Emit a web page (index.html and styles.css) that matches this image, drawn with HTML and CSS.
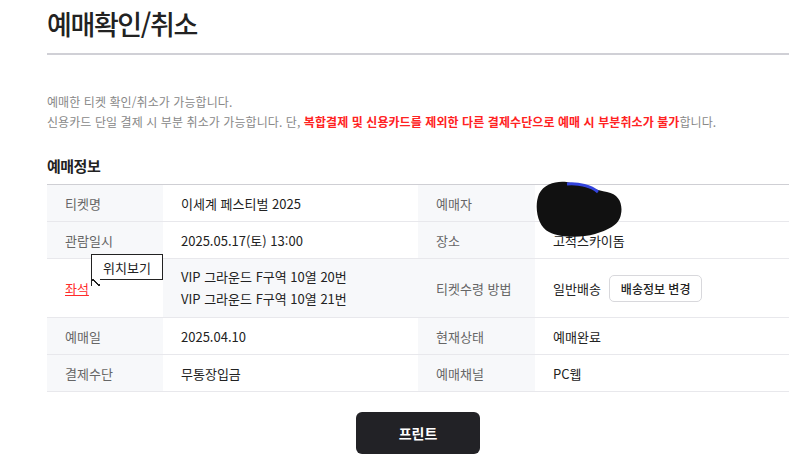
FILE: index.html
```html
<!DOCTYPE html>
<html lang="ko">
<head>
<meta charset="utf-8">
<link rel="stylesheet" href="styles.css">
</head>
<body>
<div class="page">
  <h1 class="title">예매확인/취소</h1>
  <div class="desc">
    <p>예매한 티켓 확인/취소가 가능합니다.</p>
    <p>신용카드 단일 결제 시 부분 취소가 가능합니다. 단, <strong class="warn">복합결제 및 신용카드를 제외한 다른 결제수단으로 예매 시 부분취소가 불가</strong>합니다.</p>
  </div>
  <h2 class="section">예매정보</h2>
  <div class="table">
    <div class="row">
      <div class="th">티켓명</div>
      <div class="td">이세계 페스티벌 2025</div>
      <div class="th">예매자</div>
      <div class="td redact-cell">
        <svg class="redact" width="90" height="60" viewBox="0 0 90 60">
          <path d="M4 14 C10 2 26 0 36 3 C50 6 62 10 72 12 C84 14 88 24 86 34 C84 46 72 50 60 54 C46 58 26 58 14 52 C2 46 -1 26 4 14 Z" fill="#111"/>
          <path d="M32 4 C44 3 56 6 63 12" stroke="#3344dd" stroke-width="3" fill="none"/>
        </svg>
      </div>
    </div>
    <div class="row">
      <div class="th">관람일시</div>
      <div class="td">2025.05.17(토) 13:00</div>
      <div class="th">장소</div>
      <div class="td">고척스카이돔</div>
    </div>
    <div class="row tall">
      <div class="th seat-cell">
        <a class="seat">좌석</a>
        <span class="tip">위치보기</span>
      </div>
      <div class="td lines">
        <span>VIP 그라운드 F구역 10열 20번</span>
        <span>VIP 그라운드 F구역 10열 21번</span>
      </div>
      <div class="th">티켓수령 방법</div>
      <div class="td">일반배송 <button class="small-btn">배송정보 변경</button></div>
    </div>
    <div class="row">
      <div class="th">예매일</div>
      <div class="td">2025.04.10</div>
      <div class="th">현재상태</div>
      <div class="td">예매완료</div>
    </div>
    <div class="row">
      <div class="th">결제수단</div>
      <div class="td">무통장입금</div>
      <div class="th">예매채널</div>
      <div class="td">PC웹</div>
    </div>
  </div>
  <div class="actions">
    <button class="print">프린트</button>
  </div>
</div>
</body>
</html>
```
FILE: styles.css
```css
* { box-sizing: border-box; }
html, body { margin: 0; padding: 0; background: #fff; }
body {
  font-family: "Noto Sans CJK KR", "Noto Sans", sans-serif;
  color: #222;
  overflow: hidden;
}
.page {
  margin-left: 47px;
  width: 742px;
}
.title {
  margin: 0;
  padding-top: 4px;
  height: 49px;
  font-size: 27px;
  font-weight: 500;
  letter-spacing: -1.4px;
  line-height: 40px;
  border-bottom: 2px solid #d0d0d6;
  box-sizing: content-box;
}
.desc {
  margin-top: 37px;
  font-size: 12px;
  color: #888;
  letter-spacing: 0.08px;
  line-height: 20px;
}
.desc p { margin: 0; }
.warn { color: #ff2222; font-weight: 700; }
.section {
  margin: 23px 0 0;
  font-size: 15px;
  font-weight: 700;
  line-height: 22px;
  letter-spacing: -0.5px;
  height: 29px;
}
.table {
  border-top: 1px solid #cfcfd4;
  font-size: 13px;
  letter-spacing: 0;
}
.row {
  display: grid;
  grid-template-columns: 116px 255px 117px 1fr;
  height: 37px;
  border-bottom: 1px solid #e8e8ec;
}
.row.tall { height: 59px; }
.th {
  background: #f7f8fa;
  color: #666;
  padding-left: 18px;
  display: flex;
  align-items: center;
}
.td {
  padding-left: 18px;
  display: flex;
  align-items: center;
  color: #222;
}
.td.lines {
  flex-direction: column;
  align-items: flex-start;
  justify-content: center;
  line-height: 22px;
  background: #f7f8fa;
}
.seat-cell { position: relative; background: #fff; }
.seat {
  color: #ff2b2b;
  text-decoration: underline;
}
.tip {
  position: absolute;
  left: 44px;
  top: -5px;
  width: 72px;
  height: 26px;
  border: 1px solid #222;
  background: #fff;
  color: #222;
  font-size: 13px;
  display: flex;
  align-items: center;
  justify-content: center;
  z-index: 2;
}
.tip::after {
  content: "";
  position: absolute;
  left: -1px;
  bottom: -7px;
  width: 8px;
  height: 7px;
  background: linear-gradient(to top right, transparent 42%, #222 42%, #222 58%, #fff 58%);
  border-left: 1px solid #222;
}
.redact-cell { position: relative; }
.redact {
  position: absolute;
  left: 0;
  top: -5px;
}
.small-btn {
  margin-left: 8px;
  font: inherit;
  font-size: 12px;
  font-weight: 500;
  color: #222;
  background: #fff;
  border: 1px solid #d8d8dc;
  border-radius: 5px;
  height: 27px;
  padding: 0 11px;
}
.actions {
  display: flex;
  justify-content: center;
  padding-top: 20px;
}
.print {
  width: 124px;
  height: 42px;
  background: #222226;
  color: #fff;
  border: 0;
  border-radius: 6px;
  font: inherit;
  font-size: 14px;
  font-weight: 700;
}
```
